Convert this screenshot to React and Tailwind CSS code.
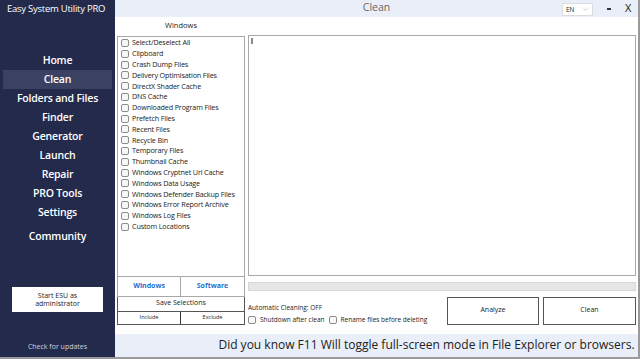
import { ChevronDown } from 'lucide-react';

const navItems = ['Home', 'Clean', 'Folders and Files', 'Finder', 'Generator', 'Launch', 'Repair', 'PRO Tools', 'Settings'];

const cleanItems = [
  'Select/Deselect All',
  'Clipboard',
  'Crash Dump Files',
  'Delivery Optimisation Files',
  'DirectX Shader Cache',
  'DNS Cache',
  'Downloaded Program Files',
  'Prefetch Files',
  'Recent Files',
  'Recycle Bin',
  'Temporary Files',
  'Thumbnail Cache',
  'Windows Cryptnet Url Cache',
  'Windows Data Usage',
  'Windows Defender Backup Files',
  'Windows Error Report Archive',
  'Windows Log Files',
  'Custom Locations',
];

function Box({ className = '' }) {
  return <span className={'block w-[8px] h-[8px] shrink-0 rounded-[2px] border border-[#8c8c8c] bg-[#f7f7f7] ' + className} />;
}

export default function App() {
  return (
    <div
      className="w-[640px] h-[359px] flex bg-white border-r-2 border-b-2 border-[#9a9a9a] overflow-hidden text-[#222]"
      style={{ fontFamily: '"Open Sans", "Noto Sans", sans-serif' }}
    >
      {/* Sidebar */}
      <aside className="w-[115px] shrink-0 bg-[#242a4b] flex flex-col text-white">
        <div className="h-[17px] pl-[7px] pt-[1px] text-[9.5px] font-medium leading-[15px] tracking-[-0.25px] whitespace-nowrap">
          Easy System Utility PRO
        </div>
        <nav className="mt-[34px] flex flex-col">
          {navItems.map((item) => (
            <div
              key={item}
              className={
                'mx-[3px] h-[19px] flex items-center justify-center text-[10.5px] font-semibold tracking-[-0.2px] ' +
                (item === 'Clean' ? 'bg-[#3b4162]' : '')
              }
            >
              {item}
            </div>
          ))}
          <div className="mx-[3px] mt-[5px] h-[19px] flex items-center justify-center text-[10.5px] font-semibold tracking-[-0.2px]">
            Community
          </div>
        </nav>
        <div className="mt-[41px] mx-[12px] h-[25px] bg-white text-[#222] flex flex-col items-center justify-center text-[7px] leading-[8px]">
          <span>Start ESU as</span>
          <span>administrator</span>
        </div>
        <div className="mt-auto mb-[5px] text-center text-[7px] text-[#d0d3de]">Check for updates</div>
      </aside>

      {/* Main */}
      <main className="flex-1 flex flex-col min-w-0">
        {/* Title bar */}
        <div className="h-[17px] bg-[#e9eef8] flex items-center relative">
          <span className="flex-1 text-center text-[10.5px] text-[#666]">Clean</span>
          <div className="absolute left-[447px] top-[3px] w-[31px] h-[13px] bg-white border border-[#dcdcdc] flex items-center justify-between px-[3px]">
            <span className="text-[6.5px] text-[#222]">EN</span>
            <ChevronDown className="w-[7px] h-[7px] text-[#999]" strokeWidth={1.5} />
          </div>
          <span className="absolute left-[492px] top-[8px] w-[4px] h-[1.5px] bg-[#333]" />
          <span className="absolute left-[510px] top-[0px] text-[11px] text-[#222]">X</span>
        </div>

        {/* Content */}
        <div className="flex-1 flex pl-[2px] pr-[2px] pb-[9px] gap-[3px]">
          {/* Left column */}
          <div className="w-[128px] shrink-0 flex flex-col">
            <div className="h-[19px] flex items-center justify-center text-[7.5px]">Windows</div>
            <div className="h-[240px] border border-[#a8a8a8] border-b-0 pt-[1px]">
              {cleanItems.map((item) => (
                <div key={item} className="h-[10.8px] flex items-center gap-[3px] pl-[3px] text-[7.2px] leading-none tracking-[-0.15px]">
                  <Box />
                  <span className="whitespace-nowrap">{item}</span>
                </div>
              ))}
            </div>
            <div className="h-[21px] grid grid-cols-2 border border-[#a8a8a8]">
              <div className="flex items-center justify-center text-[7px] font-bold text-[#1f6fcf] border-r border-[#a8a8a8]">Windows</div>
              <div className="flex items-center justify-center text-[7px] font-bold text-[#1f6fcf]">Software</div>
            </div>
            <div className="h-[15px] border border-t-0 border-[#555] flex items-center justify-center text-[7px]">
              Save Selections
            </div>
            <div className="h-[13px] grid grid-cols-2 border border-t-0 border-[#555] text-[5.5px]">
              <div className="flex items-center justify-center border-r border-[#333]">Include</div>
              <div className="flex items-center justify-center">Exclude</div>
            </div>
          </div>

          {/* Right column */}
          <div className="flex-1 flex flex-col pt-[18px] min-w-0">
            <div className="h-[241px] border border-[#a8a8a8] relative">
              <span className="absolute left-[2px] top-[2px] w-[2px] h-[6px] bg-[#888]" />
            </div>
            <div className="mt-[6px] h-[9px] bg-[#e6e6e6] border border-[#d6d6d6]" />
            <div className="mt-[6px] flex gap-[4px]">
              <div className="flex-1 flex flex-col pt-[8px] text-[6.5px] leading-none">
                <div className="mb-[5px]">Automatic Cleaning: OFF</div>
                <div className="flex items-center whitespace-nowrap">
                  <Box className="mr-[4px]" />
                  <span>Shutdown after clean</span>
                  <Box className="ml-[4px] mr-[4px]" />
                  <span>Rename files before deleting</span>
                </div>
              </div>
              <div className="w-[92px] h-[28px] border border-[#555] flex items-center justify-center text-[7px]">Analyze</div>
              <div className="w-[93px] h-[28px] border border-[#555] flex items-center justify-center text-[7px]">Clean</div>
            </div>
          </div>
        </div>

        {/* Bottom tip bar */}
        <div className="h-[24px] bg-[#e9eef8] flex items-center justify-center text-[12px] text-[#222] pl-[100px] whitespace-nowrap">
          Did you know F11 Will toggle full-screen mode in File Explorer or browsers.
        </div>
      </main>
    </div>
  );
}
